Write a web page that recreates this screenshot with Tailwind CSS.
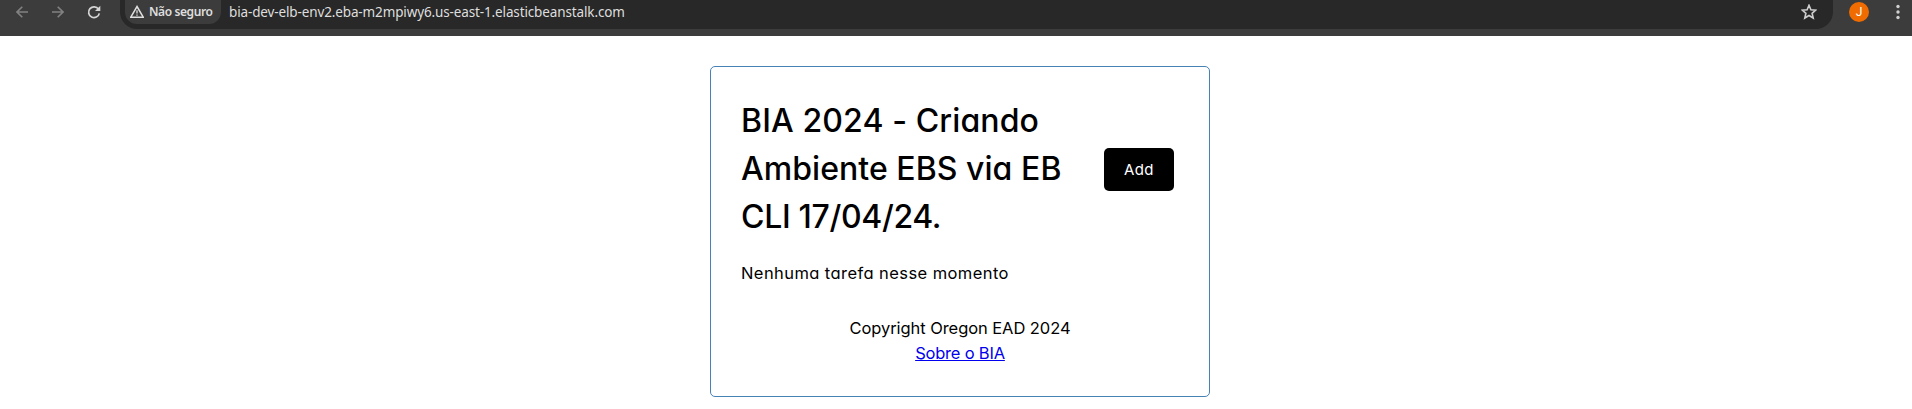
<!DOCTYPE html>
<html lang="pt-BR">
<head>
<meta charset="utf-8">
<title>BIA 2024</title>
<script src="https://cdn.jsdelivr.net/npm/@tailwindcss/browser@4"></script>
</head>
<body class="h-[409px] overflow-hidden bg-white text-black">
<header class="flex h-9 w-full items-start bg-[#3c3c3c] font-['Noto_Sans','Open_Sans',sans-serif]">
  <div class="flex h-6 w-[120px] shrink-0 items-center pl-4">
    <svg class="h-3 w-3 text-[#818181]" viewBox="0 0 12 12" fill="none" stroke="currentColor" stroke-width="1.6"><path d="M12 6H1M6.3.7 1 6l5.300 5.300"/></svg>
    <svg class="ml-6 h-3 w-3 text-[#818181]" viewBox="0 0 12 12" fill="none" stroke="currentColor" stroke-width="1.6"><path d="M0 6h11M5.700.7 11 6l-5.300 5.300"/></svg>
    <svg class="ml-6 h-3 w-3 overflow-visible text-[#d5d5d5]" viewBox="0 0 12 12"><path d="M10.500 3.200A5.400 5.400 0 1 0 11.300 7.300" fill="none" stroke="currentColor" stroke-width="1.700"/><path d="M12.300-.3v5.300H7z" fill="currentColor"/></svg>
  </div>
  <div class="flex h-[29px] w-[1713px] shrink-0 items-start rounded-b-[17px] bg-[#282828]">
    <div class="ml-[5px] flex h-6 w-24 items-center rounded-b-xl bg-[#3c3c3c] pl-[5px]">
      <svg class="h-3.5 w-3.5 shrink-0" viewBox="0 0 14 14" fill="none" stroke="#dedede" stroke-width="1.500"><path d="M7 1.500 13.200 12.200H.8z"/><path d="M7 5.300v3.200M7 9.500v1.300" stroke-width="1.300"/></svg>
      <span class="ml-[5px] text-[12px] leading-6 font-semibold whitespace-nowrap tracking-[-0.4px] text-[#dedede]">Não seguro</span>
    </div>
    <span class="ml-2 text-[13.5px] leading-[25px] whitespace-nowrap tracking-[-0.13px] text-[#dedede]">bia-dev-elb-env2.eba-m2mpiwy6.us-east-1.elasticbeanstalk.com</span>
    <svg class="mt-[4px] mr-[16px] ml-auto h-4 w-4" viewBox="0 0 16 16" fill="none" stroke="#cfcfcf" stroke-width="1.600"><path d="m8 1.300 1.900 4.400 4.900.4-3.700 3.200 1.100 4.700L8 11.500 3.800 14l1.100-4.700L1.200 6.100l4.900-.4z"/></svg>
  </div>
  <div class="mt-[2px] ml-4 flex h-5 w-5 items-center justify-center rounded-full bg-[#f06c00] font-[Roboto,sans-serif] text-[12px] text-white">J</div>
  <svg class="mt-1 ml-[21px] h-4 w-4 fill-[#d0d0d0]" viewBox="0 0 16 16"><circle cx="8" cy="2.500" r="1.700"/><circle cx="8" cy="8" r="1.700"/><circle cx="8" cy="13.500" r="1.700"/></svg>
</header>
<main class="mt-[30px] ml-[710px] h-[331px] w-[500px] rounded-[5px] border border-[#4682b4] px-[30px] pt-[30px] font-[Inter,sans-serif] [font-feature-settings:'cv11']">
  <div class="flex items-center justify-between">
    <h1 class="text-[32px] leading-[48px] font-medium whitespace-nowrap">
      <span class="block tracking-[0.12px]">BIA 2024 - Criando</span>
      <span class="block tracking-[0.05px]">Ambiente EBS via EB</span>
      <span class="block tracking-[-0.33px]">CLI 17/04/24.</span>
    </h1>
    <button class="mr-[5px] h-[43px] w-[70px] rounded-[5px] bg-black pt-[2px] text-[15px] tracking-[0.4px] text-white">Add</button>
  </div>
  <p class="mt-[19px] text-[16.5px] leading-[26px] whitespace-nowrap tracking-[0.42px]">Nenhuma tarefa nesse momento</p>
  <footer class="mt-[30px] text-center text-[16.5px] leading-[25px]">
    <p class="tracking-[-0.07px]">Copyright Oregon EAD 2024</p>
    <a href="#" class="tracking-[-0.2px] text-[#0000ee] underline">Sobre o BIA</a>
  </footer>
</main>
</body>
</html>
